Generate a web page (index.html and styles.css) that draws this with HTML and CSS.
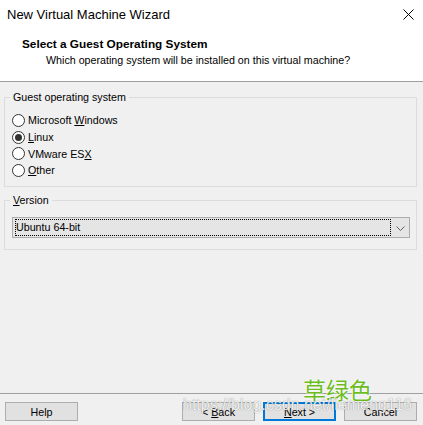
FILE: index.html
```html
<!DOCTYPE html>
<html>
<head>
<meta charset="utf-8">
<title>New Virtual Machine Wizard</title>
<link rel="stylesheet" href="styles.css">
</head>
<body>
<div class="window">
  <div class="titlebar">
    <span class="title">New Virtual Machine Wizard</span>
    <svg class="close" width="11" height="11" viewBox="0 0 11 11"><path d="M0.5 0.5L10.5 10.5M10.5 0.5L0.5 10.5" stroke="#000" stroke-width="1" fill="none"/></svg>
  </div>
  <div class="header">
    <div class="heading">Select a Guest Operating System</div>
    <div class="subheading">Which operating system will be installed on this virtual machine?</div>
  </div>
  <div class="body">
    <fieldset class="group os-group">
      <legend>Guest operating system</legend>
      <label class="radio"><span class="dot"></span><span class="label">Microsoft <u>W</u>indows</span></label>
      <label class="radio checked"><span class="dot"></span><span class="label"><u>L</u>inux</span></label>
      <label class="radio"><span class="dot"></span><span class="label">VMware ES<u>X</u></span></label>
      <label class="radio"><span class="dot"></span><span class="label"><u>O</u>ther</span></label>
    </fieldset>
    <fieldset class="group version-group">
      <legend><u>V</u>ersion</legend>
      <div class="select">
        <span class="focus">Ubuntu 64-bit</span>
        <span class="arrow">
          <svg width="9" height="5" viewBox="0 0 9 5"><path d="M0.5 0.5L4.5 4.5L8.5 0.5" stroke="#606060" stroke-width="1" fill="none"/></svg>
        </span>
      </div>
    </fieldset>
  </div>
  <div class="footer">
    <button class="btn">Help</button>
    <div class="nav">
      <button class="btn">&lt; <u>B</u>ack</button>
      <button class="btn primary"><u>N</u>ext &gt;</button>
      <button class="btn">Cancel</button>
    </div>
  </div>
  <div class="stamp">草绿色</div>
  <div class="watermark">https://blog.csdn.net/liemeng116</div>
</div>
</body>
</html>
```
FILE: styles.css
```css
* { box-sizing: border-box; }

html, body {
  margin: 0;
  padding: 0;
  background: #f0f0f0;
}

.window {
  position: relative;
  width: 423px;
  height: 425px;
  display: flex;
  flex-direction: column;
  font-family: "Liberation Sans", Arial, sans-serif;
  font-size: 10.7px;
  color: #000;
  overflow: hidden;
}

/* title bar */
.titlebar {
  height: 29px;
  background: #fff;
  display: flex;
  align-items: center;
  justify-content: space-between;
  padding: 0 9px 0 7px;
}

.title {
  font-size: 13px;
}

.close {
  margin-top: -1px;
}

/* page header */
.header {
  height: 53px;
  background: #fff;
  border-bottom: 1px solid #a0a0a0;
  padding-top: 7px;
}

.heading {
  font-weight: bold;
  font-size: 11.8px;
  padding-left: 22px;
  line-height: 16px;
}

.subheading {
  padding-left: 46px;
  line-height: 16px;
}

/* page body */
.body {
  flex: 1;
  padding: 9px 6px 0 4px;
}

.group {
  margin: 0;
  border: 1px solid #dcdcdc;
  padding: 0 6px 0 7px;
  min-width: 0;
}

.group legend {
  padding: 0 3px;
  margin-left: -2px;
  line-height: 13px;
}

.os-group {
  height: 96px;
  padding-top: 8px;
}

.radio {
  display: flex;
  align-items: center;
  height: 16.7px;
}

.dot {
  flex: none;
  width: 13px;
  height: 13px;
  border: 1px solid #333;
  border-radius: 50%;
  background: #fff;
  margin-right: 3px;
  position: relative;
}

.checked .dot::after {
  content: "";
  position: absolute;
  left: 2px;
  top: 2px;
  width: 7px;
  height: 7px;
  border-radius: 50%;
  background: #333;
}

.version-group {
  margin-top: 7px;
  height: 56px;
  padding-top: 10px;
}

/* combo box */
.select {
  height: 21px;
  background: #e5e5e5;
  border: 1px solid #adadad;
  display: flex;
  padding: 1px 0 1px 2px;
}

.focus {
  width: 376px;
  border: 1px dotted #000;
  line-height: 15px;
  padding-left: 0;
}

.arrow {
  flex: 1;
  display: flex;
  align-items: center;
  justify-content: center;
  padding-top: 1px;
}

/* button row */
.footer {
  height: 32px;
  border-top: 1px solid #a0a0a0;
  display: flex;
  justify-content: space-between;
  padding: 8px 6px 0 5px;
}

.nav {
  display: flex;
  gap: 8px;
}

.btn {
  width: 73px;
  height: 19px;
  background: #e1e1e1;
  border: 1px solid #adadad;
  font: inherit;
  color: #000;
  padding: 0;
  line-height: 16px;
}

.btn.primary {
  border: 2px solid #0078d7;
}

/* overlaid stamp and link */
.stamp {
  position: absolute;
  left: 303px;
  top: 377px;
  font-family: "Noto Sans CJK SC", sans-serif;
  font-size: 23px;
  line-height: 25px;
  color: #6dbd1e;
  text-shadow: 0 0 1px #fff, 0 0 1px #fff, 0 0 2px #fff;
}

.watermark {
  position: absolute;
  left: 183px;
  top: 396px;
  font-family: "Liberation Sans", sans-serif;
  font-size: 16px;
  line-height: 18px;
  color: rgba(255, 255, 255, 0.9);
  text-shadow: 0 0 1px rgba(0, 0, 0, 0.5);
}
```
